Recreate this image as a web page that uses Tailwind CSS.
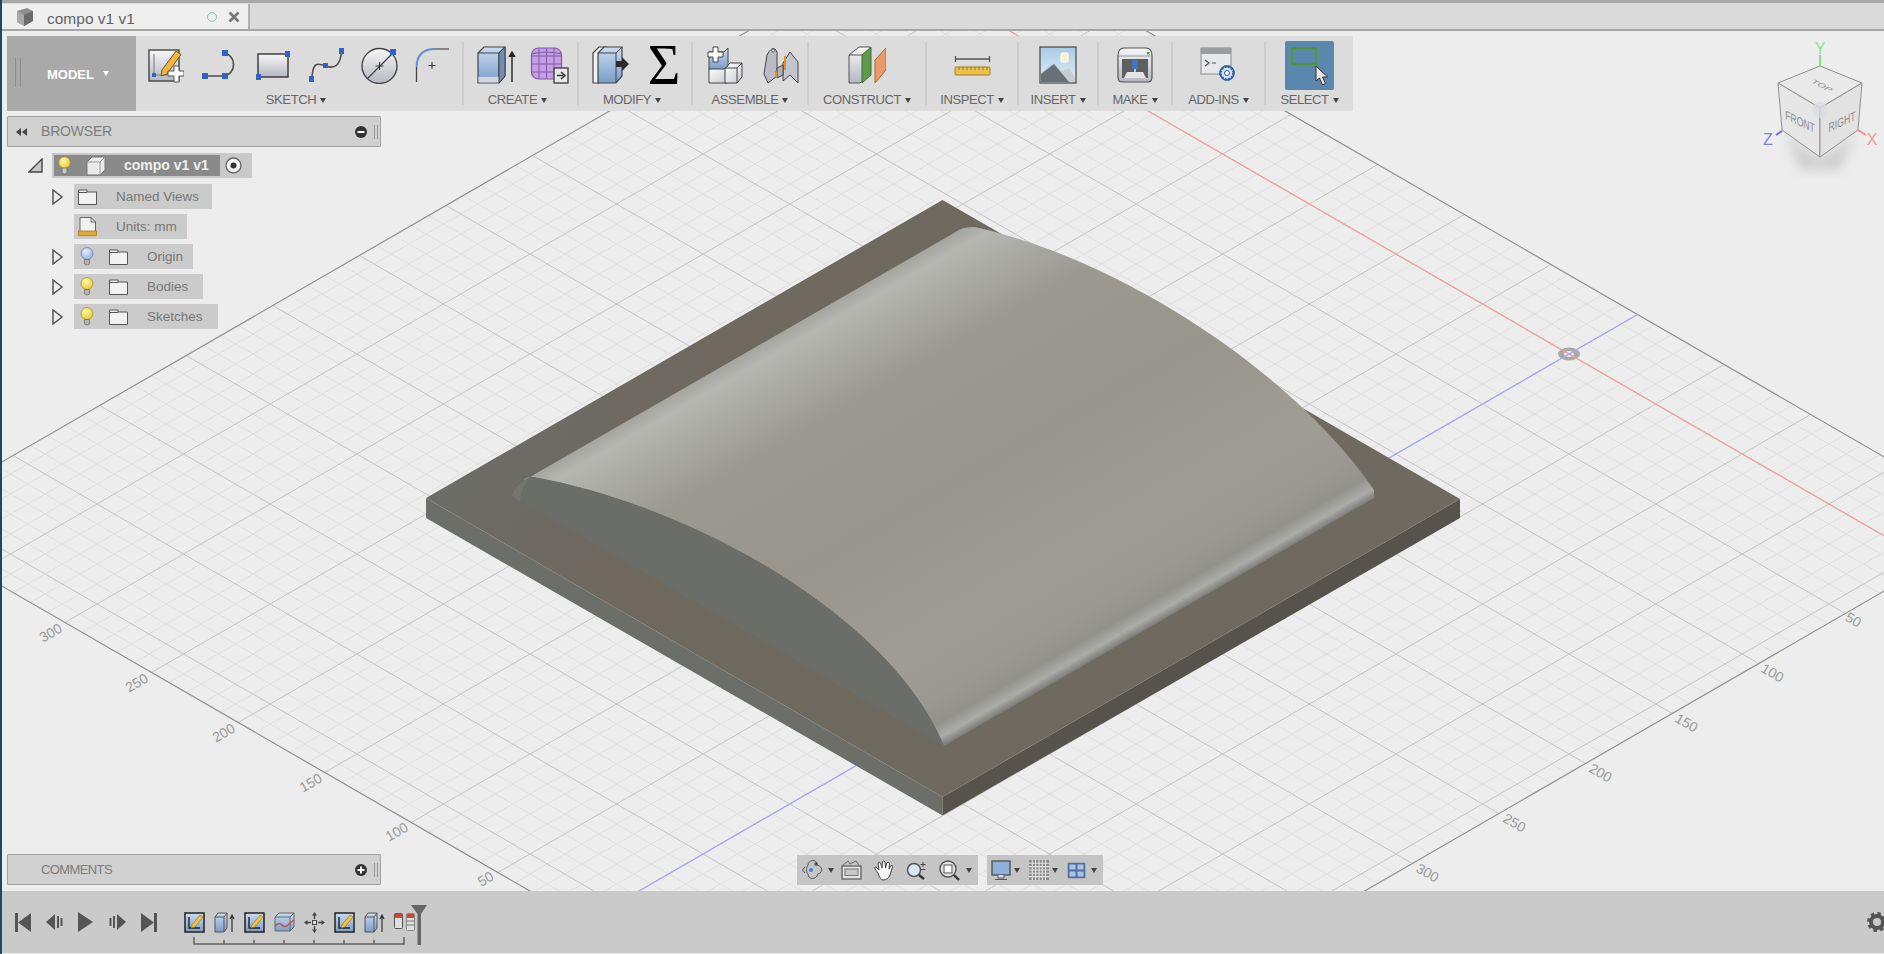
<!DOCTYPE html>
<html lang="en">
<head>
    <meta charset="UTF-8">
    <title>compo v1 v1</title>
    <script src="https://cdn.jsdelivr.net/npm/@tailwindcss/browser@4"></script>
</head>
<body class="overflow-hidden">
<!-- shared gradients -->
<svg class="absolute w-0 h-0">
    <defs>
        <linearGradient id="gPaper" x1="0" y1="0" x2="0" y2="1"><stop offset="0" stop-color="#f7f7f7"/><stop offset="1" stop-color="#b4b8c2"/></linearGradient>
        <linearGradient id="gBlue" x1="0" y1="0" x2="0" y2="1"><stop offset="0" stop-color="#c9dcf0"/><stop offset="1" stop-color="#7c9cc8"/></linearGradient>
        <linearGradient id="gWhite" x1="0" y1="0" x2="1" y2="1"><stop offset="0" stop-color="#ffffff"/><stop offset="1" stop-color="#c9ccd2"/></linearGradient>
        <linearGradient id="gSky" x1="0" y1="0" x2="0" y2="1"><stop offset="0" stop-color="#a9cbe6"/><stop offset="1" stop-color="#e3eef6"/></linearGradient>
        <radialGradient id="gBulb" cx=".4" cy=".35" r=".7"><stop offset="0" stop-color="#fff9b0"/><stop offset="1" stop-color="#efc822"/></radialGradient>
        <radialGradient id="gBulbBlue" cx=".4" cy=".35" r=".7"><stop offset="0" stop-color="#e6effc"/><stop offset="1" stop-color="#8fb0e6"/></radialGradient>
    </defs>
</svg>

<div class="flex flex-col w-[1884px] h-[954px] overflow-hidden bg-[#ededed] text-[#777] font-['Liberation_Sans',sans-serif] border-l-2 border-l-[#1c4a66]">

    <!-- Tab bar -->
    <div class="flex h-[31px] shrink-0 bg-[#dadada] border-t-[3px] border-t-[#a8a8a8] border-b-2 border-b-[#a6a6a6]">
        <div class="flex items-center w-[248px] mt-[1px] bg-[#efefef] border-r-2 border-r-[#b0b0b0] pl-[12px]">
            <svg width="22" height="20" viewBox="0 0 20 20"><path d="M2 4 L12 1 L18 4 L18 14 L9 19 L2 15 Z" fill="#8f8f8f"/><path d="M9 8 L18 4 L18 14 L9 19 Z" fill="#6a6a6a"/><path d="M2 4 L9 8 L9 19 L2 15 Z" fill="#a8a8a8"/></svg>
            <span class="ml-[11px] mt-[5px] text-[15.5px] text-[#626262]">compo v1 v1</span>
            <span class="ml-auto w-[10px] h-[10px] rounded-full border-[1.5px] border-[#7fcdbb]"></span>
            <svg class="ml-[11px] mr-[8px]" width="12" height="12" viewBox="0 0 12 12"><path d="M1.5 1.5 L10.5 10.5 M10.5 1.5 L1.5 10.5" stroke="#777" stroke-width="2.6"/></svg>
        </div>
    </div>

    <!-- Canvas -->
    <div class="relative flex flex-col flex-1 min-h-0">
        <svg id="scene" class="absolute left-[-2px] top-0 w-[1884px] h-[860px]" viewBox="0 31 1884 860">
            <defs>
                <linearGradient id="domeFace" gradientUnits="userSpaceOnUse" x1="738" y1="357" x2="957" y2="738">
                    <stop offset="0" stop-color="#a4a59f"/><stop offset=".035" stop-color="#b5b6b1"/><stop offset=".10" stop-color="#abaca6"/><stop offset=".22" stop-color="#9b9990"/>
                    <stop offset=".5" stop-color="#98958c"/><stop offset=".78" stop-color="#a09d95"/><stop offset=".9" stop-color="#9a9890"/><stop offset=".95" stop-color="#92928c"/>
                    <stop offset=".98" stop-color="#abaca7"/><stop offset="1" stop-color="#7c7d78"/>
                </linearGradient>
                <linearGradient id="baseTop" gradientUnits="userSpaceOnUse" x1="426" y1="498" x2="942" y2="797">
                    <stop offset="0" stop-color="#6c6d69"/><stop offset=".12" stop-color="#6d6b65"/><stop offset=".3" stop-color="#6f695f"/><stop offset="1" stop-color="#6e6a60"/>
                </linearGradient>
            </defs>
            <g id="grid"></g>
            <!-- grid labels -->
            <g class="fill-[#9a9a9a] text-[14px]" text-anchor="middle">
                <text transform="translate(53 637) rotate(-30)">300</text>
                <text transform="translate(139 687) rotate(-30)">250</text>
                <text transform="translate(226 737) rotate(-30)">200</text>
                <text transform="translate(313 787) rotate(-30)">150</text>
                <text transform="translate(399 836) rotate(-30)">100</text>
                <text transform="translate(488 883) rotate(-30)">50</text>
                <text transform="translate(1425 877) rotate(30)">300</text>
                <text transform="translate(1512 827) rotate(30)">250</text>
                <text transform="translate(1598 777) rotate(30)">200</text>
                <text transform="translate(1684 727) rotate(30)">150</text>
                <text transform="translate(1770 677) rotate(30)">100</text>
                <text transform="translate(1851 624) rotate(30)">50</text>
            </g>
            <!-- origin -->
            <path fill-rule="evenodd" d="M1558 354 a11 6.5 0 1 0 22 0 a11 6.5 0 1 0 -22 0 Z M1564 354 a5 3 0 1 1 10 0 a5 3 0 1 1 -10 0 Z" fill="#a9a9a9"/>
            <g id="axes"></g>
            <!-- model -->
            <polygon points="426,498 942.5,797 942.5,815.5 426,518" fill="#6c6e6a"/>
            <polygon points="942.5,797 1460,499 1460,518 942.5,815.5" fill="#55534b"/>
            <polygon points="942.5,200 1460,499 942.5,797 426,498" fill="url(#baseTop)"/>
            <path d="M954 233 Q962 226 975 227 C1130 262 1300 380 1374 490 L1374 498 L944 746 C890 615 690 505 533 477 Q528 476 523 481 Z" fill="url(#domeFace)"/>
            <path d="M512 496 Q515 483 533 477 C690 505 890 615 944 746 Z" fill="#6b6d69"/>
            <path d="M512 496 Q515 483 533 477 Q522 482 520 501 Z" fill="#757672"/>
        </svg>

        <!-- Toolbar -->
        <div class="relative flex w-[1346px] h-[75px] mt-[5px] ml-[5px] bg-[#dcdcdc]">
            <div class="relative flex items-center w-[129px] h-[75px] bg-[#a9a9a9] pl-[40px] pt-[2px]">
                <span class="absolute left-[8px] top-[22px] h-[29px] w-[6px] border-x border-x-[#8e8e8e]"></span>
                <span class="text-[13px] font-bold text-white">MODEL</span>
                <i class="ml-[9px] mb-[2px] w-0 h-0 border-x-[3.5px] border-t-[5px] border-x-transparent border-t-white"></i>
            </div>

            <!-- Sketch -->
            <div class="flex flex-col items-center w-[328px] h-[63px] my-[6px] border-r-2 border-r-[#cdcdcd]">
                <div class="flex items-center shrink-0 w-full h-[51px] pb-[5px] pl-[12px] gap-[16.5px]">
                    <svg width="36" height="36" viewBox="0 0 36 36"><rect x="1" y="3" width="30" height="31" fill="url(#gPaper)" stroke="#444" stroke-width="1.4"/><path d="M6 7 V28 H27" fill="none" stroke="#777"/><rect x="4" y="26" width="4" height="4" fill="#2f63c8"/><path d="M14 23 L28 4 L33 7.5 L19 27 L13 29 Z" fill="#f4b63a" stroke="#6a5a30"/><path d="M26 19 h5 v5 h5 v5 h-5 v6 h-5 v-6 h-6 v-5 h6 Z" fill="#fff" stroke="#555"/></svg>
                    <svg width="38" height="34" viewBox="0 0 38 34"><path d="M4 28 H24 A12 12 0 0 0 24 5" fill="none" stroke="#4d4d4d" stroke-width="1.6"/><g fill="#2f63c8"><rect x="1" y="25" width="6" height="6"/><rect x="21" y="25" width="6" height="6"/><rect x="21" y="2" width="6" height="6"/></g></svg>
                    <svg width="36" height="30" viewBox="0 0 36 30"><rect x="3" y="4" width="30" height="23" fill="url(#gPaper)" stroke="#3f3f3f" stroke-width="1.5"/><g fill="#2f63c8"><rect x="30" y="1" width="5" height="6"/><rect x="1" y="24" width="5" height="6"/></g></svg>
                    <svg width="37" height="36" viewBox="0 0 37 36"><path d="M4 33 C4 14 10 16 18 19 C26 22 32 20 34 3" fill="none" stroke="#4d4d4d" stroke-width="1.6"/><g fill="#2f63c8"><rect x="1" y="29" width="5" height="6"/><rect x="15" y="16" width="5" height="5"/><rect x="31" y="1" width="5" height="6"/></g></svg>
                    <svg width="37" height="37" viewBox="0 0 37 37"><circle cx="18.5" cy="19" r="17.5" fill="url(#gPaper)" stroke="#444" stroke-width="1.4"/><path d="M6 32 L32 6" stroke="#444" stroke-width="1.2"/><path d="M18.5 15 v8 M14.5 19 h8" stroke="#333"/><rect x="29" y="2" width="6" height="6" fill="#2f63c8"/></svg>
                    <svg width="35" height="36" viewBox="0 0 35 36"><path d="M1.5 35 V20" stroke="#444" stroke-width="1.3"/><path d="M1.5 20 Q2 3 18 2" fill="none" stroke="#5f8bd8" stroke-width="1.8"/><path d="M18 2 H34" stroke="#555" stroke-width="1.3"/><path d="M17 15 v7 M13.5 18.5 h7" stroke="#333"/></svg>
                </div>
                <div class="flex items-center shrink-0 gap-[4px] h-[14px] pr-[6px] text-[13px] leading-[14px] tracking-[-0.4px] text-[#666]">SKETCH<i class="w-0 h-0 border-x-[3.5px] border-t-[5px] border-x-transparent border-t-[#444]"></i></div>
            </div>

            <!-- Create -->
            <div class="flex flex-col items-center w-[115px] h-[63px] my-[6px] border-r-2 border-r-[#cdcdcd]">
                <div class="flex items-center shrink-0 w-full h-[51px] pb-[5px] pl-[13px] gap-[14px]">
                    <svg width="39" height="38" viewBox="0 0 39 38"><path d="M1 7 L7 1 H28 V30 L22 37 H1 Z" fill="url(#gBlue)" stroke="#444" stroke-width="1.2"/><path d="M1 7 H22 L28 1 M22 7 V37" fill="none" stroke="#444" stroke-width="1.2"/><path d="M22 7 L28 1 V30 L22 37 Z" fill="#6f8fb8" stroke="#444"/><rect x="1.5" y="31" width="20" height="5.5" fill="#d4d6d8"/><path d="M35 36 V7 M32 11 L35 6 L38 11" fill="#222" stroke="#222" stroke-width="1.4"/></svg>
                    <svg width="39" height="38" viewBox="0 0 39 38"><rect x="1.5" y="2" width="30" height="31" rx="7" fill="#c79ee6" stroke="#7e5aa6" stroke-width="1.2"/><path d="M1.5 10 H31 M1.5 18 H31 M1.5 26 H31 M9 2 V33 M16.5 2 V33 M24 2 V33" stroke="#7e5aa6" fill="none"/><path d="M1.5 8 Q16 4 31.5 8" stroke="#7e5aa6" fill="none"/><rect x="24" y="22" width="14" height="15" fill="#e8e8e8" stroke="#444" stroke-width="1.4"/><path d="M27 29.5 h6 M31 26 l4 3.5 l-4 3.5" fill="none" stroke="#333" stroke-width="1.6"/></svg>
                </div>
                <div class="flex items-center shrink-0 gap-[4px] h-[14px] pr-[6px] text-[13px] leading-[14px] tracking-[-0.4px] text-[#666]">CREATE<i class="w-0 h-0 border-x-[3.5px] border-t-[5px] border-x-transparent border-t-[#444]"></i></div>
            </div>

            <!-- Modify -->
            <div class="flex flex-col items-center w-[114px] h-[63px] my-[6px] border-r-2 border-r-[#cdcdcd]">
                <div class="flex items-center shrink-0 w-full h-[51px] pb-[5px] pl-[13px] gap-[19px]">
                    <svg width="37" height="38" viewBox="0 0 37 38"><path d="M1 7 L7 1 H14 V30 L7 37 H1 Z" fill="#f1f1f1" stroke="#444" stroke-width="1.2"/><path d="M6 7 L12 1 H30 V30 L24 37 H6 Z" fill="url(#gBlue)" stroke="#444" stroke-width="1.2"/><path d="M6 7 H24 L30 1 M24 7 V37" fill="none" stroke="#444"/><path d="M24 15 H30 V11 L37 18 L30 25 V21 H24 Z" fill="#2c2c2c"/></svg>
                    <span class="w-[32px] h-[38px] flex items-center justify-center text-[56px] leading-[38px] text-black font-['Liberation_Serif',serif]">Σ</span>
                </div>
                <div class="flex items-center shrink-0 gap-[4px] h-[14px] pr-[6px] text-[13px] leading-[14px] tracking-[-0.4px] text-[#666]">MODIFY<i class="w-0 h-0 border-x-[3.5px] border-t-[5px] border-x-transparent border-t-[#444]"></i></div>
            </div>

            <!-- Assemble -->
            <div class="flex flex-col items-center w-[116px] h-[63px] my-[6px] border-r-2 border-r-[#cdcdcd]">
                <div class="flex items-center shrink-0 w-full h-[51px] pb-[5px] pl-[14px] gap-[20px]">
                    <svg width="36" height="38" viewBox="0 0 36 38"><path d="M2 22 H20 V37 H2 Z" fill="url(#gWhite)" stroke="#444"/><path d="M18 22 L23 17 H35 V31 L30 37 H18 Z" fill="url(#gWhite)" stroke="#444"/><path d="M18 22 H30 L35 17 M30 22 V37" fill="none" stroke="#444"/><path d="M2 6 H17 L21 2 V20 L17 23 H2 Z" fill="url(#gBlue)" stroke="#444"/><path d="M6 1 h5 v5 h5 v5 h-5 v5 h-5 v-5 h-5 v-5 h5 Z" fill="#fff" stroke="#444"/></svg>
                    <svg width="36" height="38" viewBox="0 0 36 38"><path d="M1 28 L4 9 Q8 1 12 3 L14 6 V30 L5 37 Z" fill="#b9bcc4" stroke="#444"/><path d="M20 17 L27 6 L35 16 V37 L27 29 L20 35 Z" fill="#c2c5cc" stroke="#444"/><path d="M14 22 L20 19 V29 L14 32 Z" fill="#aeb1b8" stroke="#444"/><path d="M13 25 V31 M22 10 V24" stroke="#f08a24" stroke-width="2"/><circle cx="10" cy="4.5" r="1.5" fill="#fff" stroke="#555"/></svg>
                </div>
                <div class="flex items-center shrink-0 gap-[4px] h-[14px] text-[13px] leading-[14px] tracking-[-0.4px] text-[#666]">ASSEMBLE<i class="w-0 h-0 border-x-[3.5px] border-t-[5px] border-x-transparent border-t-[#444]"></i></div>
            </div>

            <!-- Construct -->
            <div class="flex flex-col items-center w-[118px] h-[63px] my-[6px] border-r-2 border-r-[#cdcdcd]">
                <div class="flex items-center justify-center shrink-0 w-full h-[51px] pb-[5px]">
                    <svg width="38" height="38" viewBox="0 0 38 38"><path d="M1 9 L11 1 H22 V29 L12 37 H1 Z" fill="url(#gPaper)" stroke="#555"/><path d="M14 9 L23 1 V29 L14 37 Z" fill="#5f9a4a" stroke="#3f6a30"/><path d="M1 9 H14" stroke="#555"/><path d="M27 14 L38 2 V24 L27 37 Z" fill="#eb9c66" stroke="#a8683a"/></svg>
                </div>
                <div class="flex items-center shrink-0 gap-[4px] h-[14px] text-[13px] leading-[14px] tracking-[-0.4px] text-[#666]">CONSTRUCT<i class="w-0 h-0 border-x-[3.5px] border-t-[5px] border-x-transparent border-t-[#444]"></i></div>
            </div>

            <!-- Inspect -->
            <div class="flex flex-col items-center w-[92px] h-[63px] my-[6px] border-r-2 border-r-[#cdcdcd]">
                <div class="flex items-center justify-center shrink-0 w-full h-[51px] pb-[5px]">
                    <svg width="37" height="21" viewBox="0 0 37 21"><path d="M1.5 1 V7 M1.5 4 H35.5 M35.5 1 V7" fill="none" stroke="#555" stroke-width="1.3"/><rect x="1" y="12" width="35" height="8" rx="1" fill="#eec24a" stroke="#a07e2a"/><path d="M5 12 v3 M9 12 v3 M13 12 v3 M17 12 v3 M21 12 v3 M25 12 v3 M29 12 v3 M33 12 v3" stroke="#8a6a20" stroke-width=".8"/></svg>
                </div>
                <div class="flex items-center shrink-0 gap-[4px] h-[14px] text-[13px] leading-[14px] tracking-[-0.4px] text-[#666]">INSPECT<i class="w-0 h-0 border-x-[3.5px] border-t-[5px] border-x-transparent border-t-[#444]"></i></div>
            </div>

            <!-- Insert -->
            <div class="flex flex-col items-center w-[80px] h-[63px] my-[6px] border-r-2 border-r-[#cdcdcd]">
                <div class="flex items-center justify-center shrink-0 w-full h-[51px] pb-[5px]">
                    <svg width="38" height="38" viewBox="0 0 38 38"><rect x="1" y="1" width="36" height="36" fill="url(#gSky)" stroke="#5a5a5a" stroke-width="1.4"/><rect x="22" y="7" width="7" height="9" rx="1" fill="#fbf2c0" stroke="#fff"/><path d="M2 36 V27 L14 17 L23 25 L30 22 L36 32 V36 Z" fill="#c5ccd3"/><path d="M2 36 V28 L15 18 L30 36 Z" fill="#6a7078"/></svg>
                </div>
                <div class="flex items-center shrink-0 gap-[4px] h-[14px] text-[13px] leading-[14px] tracking-[-0.4px] text-[#666]">INSERT<i class="w-0 h-0 border-x-[3.5px] border-t-[5px] border-x-transparent border-t-[#444]"></i></div>
            </div>

            <!-- Make -->
            <div class="flex flex-col items-center w-[74px] h-[63px] my-[6px] border-r-2 border-r-[#cdcdcd]">
                <div class="flex items-center justify-center shrink-0 w-full h-[51px] pb-[5px]">
                    <svg width="38" height="36" viewBox="0 0 38 36"><path d="M2 9 Q2 1 8 1 H30 Q36 1 36 9 V30 Q36 35 32 35 H6 Q2 35 2 30 Z" fill="url(#gPaper)" stroke="#555" stroke-width="1.2"/><path d="M2 9 H36" stroke="#999"/><rect x="6" y="12" width="26" height="19" fill="#5f5f5f"/><rect x="16" y="13" width="6" height="9" fill="#3f77c0"/><path d="M19 22 v3" stroke="#e6e6e6" stroke-width="1.5"/><path d="M8 31 L11 25 H27 L30 31 Z" fill="#e4e4e4"/><rect x="31" y="5" width="2.5" height="2.5" fill="#2fa04a"/></svg>
                </div>
                <div class="flex items-center shrink-0 gap-[4px] h-[14px] text-[13px] leading-[14px] tracking-[-0.4px] text-[#666]">MAKE<i class="w-0 h-0 border-x-[3.5px] border-t-[5px] border-x-transparent border-t-[#444]"></i></div>
            </div>

            <!-- Add-ins -->
            <div class="flex flex-col items-center w-[93px] h-[63px] my-[6px] border-r-2 border-r-[#cdcdcd]">
                <div class="flex items-center justify-center shrink-0 w-full h-[51px] pb-[5px]">
                    <svg width="38" height="36" viewBox="0 0 38 36"><rect x="1" y="1" width="30" height="26" fill="#e6e8ec" stroke="#8a8a8a"/><rect x="1" y="1" width="30" height="6" fill="#9a9ca0"/><path d="M5 13 L9 16 L5 19 M12 16 H16" fill="none" stroke="#555" stroke-width="1.2"/><circle cx="27" cy="26" r="6.5" fill="#cfe0f4" stroke="#2f5f9c" stroke-width="2.4" stroke-dasharray="2.2 1.2"/><circle cx="27" cy="26" r="7" fill="none" stroke="#2f5f9c" stroke-width="1.4"/><circle cx="27" cy="26" r="2.5" fill="#fff" stroke="#2f5f9c"/></svg>
                </div>
                <div class="flex items-center shrink-0 gap-[4px] h-[14px] text-[13px] leading-[14px] tracking-[-0.4px] text-[#666]">ADD-INS<i class="w-0 h-0 border-x-[3.5px] border-t-[5px] border-x-transparent border-t-[#444]"></i></div>
            </div>

            <!-- Select -->
            <div class="flex flex-col items-center w-[87px] h-[63px] my-[6px]">
                <div class="flex items-center justify-center shrink-0 w-full h-[51px] pb-[5px]">
                    <div class="relative shrink-0 w-[49px] h-[49px] bg-[#5a87ad] rounded-[2px]">
                        <span class="absolute left-[6px] top-[6px] w-[26px] h-[18px] border-[2px] border-[#4f9a2a]"></span>
                        <svg class="absolute left-[30px] top-[24px]" width="14" height="22" viewBox="0 0 14 22"><path d="M1 1 L1 16 L4.5 13 L7.5 20 L10.5 18.5 L7.5 12 L12.5 12 Z" fill="#e9e9e9" stroke="#333"/></svg>
                    </div>
                </div>
                <div class="flex items-center shrink-0 gap-[4px] h-[14px] text-[13px] leading-[14px] tracking-[-0.4px] text-[#666]">SELECT<i class="w-0 h-0 border-x-[3.5px] border-t-[5px] border-x-transparent border-t-[#444]"></i></div>
            </div>
        </div>

        <!-- Browser header -->
        <div class="relative flex items-center w-[374px] h-[31px] mt-[5px] ml-[5px] pl-[7px] pr-[2px] bg-[#d0d0d0] border border-[#a3a3a3] rounded-[1px]">
            <svg width="13" height="10" viewBox="0 0 13 10"><path d="M6 1 L1 5 L6 9 Z M12 1 L7 5 L12 9 Z" fill="#444"/></svg>
            <span class="ml-[13px] text-[14px] tracking-[-0.2px] text-[#7d7d7d]">BROWSER</span>
            <svg class="ml-auto mr-[3px]" width="12" height="12" viewBox="0 0 12 12"><circle cx="6" cy="6" r="6" fill="#333"/><rect x="2.5" y="5" width="7" height="2" fill="#fff"/></svg>
            <span class="ml-[4px] w-[4px] h-[14px] border-x border-x-[#9a9a9a]"></span>
        </div>

        <!-- Tree -->
        <div class="relative flex flex-col gap-[5px] mt-[6px] text-[13.5px] text-[#777]">
            <div class="flex items-center h-[25px] mb-[1px] ml-[26px]">
                <svg width="15" height="15" viewBox="0 0 15 15"><path d="M14 1 V14 H1 Z" fill="#c9c9c9" stroke="#444" stroke-width="1.4"/></svg>
                <div class="flex items-center w-[200px] h-[25px] ml-[9px] bg-[#c9c9c9]">
                    <div class="flex items-center w-[166px] h-[21px] ml-[2px] bg-[#8a8a8a] pl-[4px]">
                        <svg width="13" height="19" viewBox="0 0 13 19"><circle cx="6.5" cy="6.5" r="5.8" fill="url(#gBulb)" stroke="#a08a30" stroke-width=".7"/><path d="M4 12 H9 V17 Q6.5 19 4 17 Z" fill="#c9c9c9" stroke="#666" stroke-width=".7"/></svg>
                        <svg class="ml-[15px]" width="20" height="20" viewBox="0 0 20 20"><path d="M1 6 L6 1 H19 V14 L14 19 H1 Z" fill="#eaeaea" stroke="#777"/><path d="M1 6 H14 L19 1 M14 6 V19" fill="none" stroke="#999"/></svg>
                        <span class="ml-[18px] text-[14px] font-bold text-[#eeeeee]">compo v1 v1</span>
                    </div>
                    <svg class="ml-[5px]" width="17" height="17" viewBox="0 0 17 17"><circle cx="8.5" cy="8.5" r="7.5" fill="#f3f3f3" stroke="#666" stroke-width="1.3"/><circle cx="8.5" cy="8.5" r="3" fill="#333"/></svg>
                </div>
            </div>

            <div class="flex items-center h-[25px] ml-[50px]">
                <svg class="w-[22px]" width="22" height="16" viewBox="0 0 22 16"><path d="M1 1 L10 8 L1 15 Z" fill="#efefef" stroke="#555" stroke-width="1.5"/></svg>
                <div class="flex items-center w-[138px] h-[25px] pl-[4px] bg-[#cbcbcb]">
                    <svg width="19" height="16" viewBox="0 0 19 16"><path d="M.5 1 H9 V3 H18.5 V15.5 H.5 Z" fill="#f2f2f2" stroke="#555"/><path d="M.5 3.5 H9" stroke="#555"/></svg>
                    <span class="ml-[19px] mt-[1px]">Named Views</span>
                </div>
            </div>

            <div class="flex items-center h-[25px] ml-[72px]">
                <div class="flex items-center w-[113px] h-[25px] pl-[4px] bg-[#cbcbcb]">
                    <svg width="19" height="19" viewBox="0 0 19 19"><path d="M2 .5 H13 L17.5 5 V15 H2 Z" fill="#f2f2f2" stroke="#666"/><path d="M13 .5 V5 H17.5" fill="none" stroke="#666"/><rect x=".5" y="14" width="18" height="4.5" fill="#e8a92a" stroke="#a07420" stroke-width=".7"/></svg>
                    <span class="ml-[19px] mt-[1px]">Units: mm</span>
                </div>
            </div>

            <div class="flex items-center h-[25px] ml-[50px]">
                <svg class="w-[22px]" width="22" height="16" viewBox="0 0 22 16"><path d="M1 1 L10 8 L1 15 Z" fill="#efefef" stroke="#555" stroke-width="1.5"/></svg>
                <div class="flex items-center w-[119px] h-[25px] pl-[6px] bg-[#cbcbcb]">
                    <svg width="14" height="19" viewBox="0 0 14 19"><circle cx="7" cy="6.5" r="6" fill="url(#gBulbBlue)" stroke="#6a7a96" stroke-width=".7"/><path d="M4.5 12.5 H9.5 V17 Q7 19 4.5 17 Z" fill="#b5b5b5" stroke="#666" stroke-width=".7"/></svg>
                    <svg class="ml-[15px]" width="19" height="16" viewBox="0 0 19 16"><path d="M.5 1 H9 V3 H18.5 V15.5 H.5 Z" fill="#f2f2f2" stroke="#555"/><path d="M.5 3.5 H9" stroke="#555"/></svg>
                    <span class="ml-[19px] mt-[1px]">Origin</span>
                </div>
            </div>

            <div class="flex items-center h-[25px] ml-[50px]">
                <svg class="w-[22px]" width="22" height="16" viewBox="0 0 22 16"><path d="M1 1 L10 8 L1 15 Z" fill="#efefef" stroke="#555" stroke-width="1.5"/></svg>
                <div class="flex items-center w-[129px] h-[25px] pl-[6px] bg-[#cbcbcb]">
                    <svg width="14" height="19" viewBox="0 0 14 19"><circle cx="7" cy="6.5" r="6" fill="url(#gBulb)" stroke="#a08a30" stroke-width=".7"/><path d="M4.5 12.5 H9.5 V17 Q7 19 4.5 17 Z" fill="#b5b5b5" stroke="#666" stroke-width=".7"/></svg>
                    <svg class="ml-[15px]" width="19" height="16" viewBox="0 0 19 16"><path d="M.5 1 H9 V3 H18.5 V15.5 H.5 Z" fill="#f2f2f2" stroke="#555"/><path d="M.5 3.5 H9" stroke="#555"/></svg>
                    <span class="ml-[19px] mt-[1px]">Bodies</span>
                </div>
            </div>

            <div class="flex items-center h-[25px] ml-[50px]">
                <svg class="w-[22px]" width="22" height="16" viewBox="0 0 22 16"><path d="M1 1 L10 8 L1 15 Z" fill="#efefef" stroke="#555" stroke-width="1.5"/></svg>
                <div class="flex items-center w-[144px] h-[25px] pl-[6px] bg-[#cbcbcb]">
                    <svg width="14" height="19" viewBox="0 0 14 19"><circle cx="7" cy="6.5" r="6" fill="url(#gBulb)" stroke="#a08a30" stroke-width=".7"/><path d="M4.5 12.5 H9.5 V17 Q7 19 4.5 17 Z" fill="#b5b5b5" stroke="#666" stroke-width=".7"/></svg>
                    <svg class="ml-[15px]" width="19" height="16" viewBox="0 0 19 16"><path d="M.5 1 H9 V3 H18.5 V15.5 H.5 Z" fill="#f2f2f2" stroke="#555"/><path d="M.5 3.5 H9" stroke="#555"/></svg>
                    <span class="ml-[19px] mt-[1px]">Sketches</span>
                </div>
            </div>
        </div>

        <!-- Comments and view bar -->
        <div class="relative flex items-end mt-auto mb-[5px] ml-[5px]">
            <div class="flex items-center w-[374px] h-[31px] pl-[33px] pr-[2px] bg-[#d0d0d0] border border-[#a3a3a3] rounded-[1px]">
                <span class="text-[13px] tracking-[-0.6px] text-[#7d7d7d]">COMMENTS</span>
                <svg class="ml-auto mr-[3px]" width="12" height="12" viewBox="0 0 12 12"><circle cx="6" cy="6" r="6" fill="#333"/><path d="M6 2.5 V9.5 M2.5 6 H9.5" stroke="#fff" stroke-width="2"/></svg>
                <span class="ml-[4px] w-[4px] h-[14px] border-x border-x-[#9a9a9a]"></span>
            </div>

            <div class="flex items-center w-[181px] h-[30px] ml-[416px] pl-[5px] bg-[#c5c5c5]">
                <svg width="22" height="22" viewBox="0 0 22 22"><path d="M6 6 C6 1 15 -1 15 6 C20 7 22 13 16 15 C14 21 6 21 6 15 C4 14 4 8 6 6 Z" fill="none" stroke="#555"/><path d="M3 8 L0.5 11 L3 14" fill="none" stroke="#555"/><circle cx="9" cy="11" r="2" fill="#2f8ae0"/><path d="M14 3 v4 M12 5 h4" stroke="#333"/></svg>
                <i class="ml-[4px] w-0 h-0 border-x-[3.5px] border-t-[5px] border-x-transparent border-t-[#444]"></i>
                <svg class="ml-[7px]" width="21" height="20" viewBox="0 0 21 20"><path d="M2 5 L7 1 L9 4 L15 1 L18 5" fill="none" stroke="#666"/><rect x="1" y="6" width="19" height="13" fill="#e2e2e2" stroke="#555" stroke-width="1.2"/><rect x="4" y="9" width="13" height="6.5" fill="#c8c8c8" stroke="#777"/></svg>
                <svg class="ml-[11px]" width="21" height="21" viewBox="0 0 21 21"><path d="M5 13 L2 9 Q1 7 3 7 L6 10 L5 3 Q6 1 7.5 3 L9 8 L9.5 1.5 Q11 0 12 2 L12.5 8 L14 2.5 Q16 1.5 16.5 3.5 L16 9 L18 5.5 Q20 5 19.5 7 L17 15 Q15 20 10 20 Q7 20 5 13 Z" fill="#fbfbfb" stroke="#444"/></svg>
                <svg class="ml-[12px]" width="21" height="20" viewBox="0 0 21 20"><circle cx="8" cy="10" r="6.5" fill="#d9e8f2" stroke="#555" stroke-width="1.5"/><path d="M13 15 L18 19" stroke="#333" stroke-width="2.4"/><path d="M17 2 v5 M14.5 4.5 h5 M14.5 9.5 h5" stroke="#444"/></svg>
                <svg class="ml-[12px]" width="21" height="21" viewBox="0 0 21 21"><circle cx="9" cy="9" r="8" fill="#e4e4e4" stroke="#555" stroke-width="1.5"/><rect x="5" y="5" width="8" height="8" fill="#fafafa" stroke="#555"/><path d="M15 15 L20 20" stroke="#333" stroke-width="2.4"/></svg>
                <i class="ml-[6px] w-0 h-0 border-x-[3.5px] border-t-[5px] border-x-transparent border-t-[#444]"></i>
            </div>

            <div class="flex items-center w-[116px] h-[30px] ml-[9px] pl-[4px] bg-[#c5c5c5]">
                <svg width="20" height="21" viewBox="0 0 20 21"><rect x="1" y="1" width="18" height="14" fill="#8fb2dc" stroke="#555" stroke-width="1.4"/><path d="M7 15 V18 H13 V15" fill="#ddd" stroke="#555"/><path d="M4 19.5 H16" stroke="#555"/></svg>
                <i class="ml-[3px] w-0 h-0 border-x-[3.5px] border-t-[5px] border-x-transparent border-t-[#444]"></i>
                <svg class="ml-[9px]" width="20" height="20" viewBox="0 0 20 20"><rect width="20" height="20" fill="#8a8a8a"/><path d="M3.3 0 V20 M6.6 0 V20 M10 0 V20 M13.3 0 V20 M16.6 0 V20 M0 3.3 H20 M0 6.6 H20 M0 10 H20 M0 13.3 H20 M0 16.6 H20" stroke="#e4e4e4" stroke-width="1.1"/></svg>
                <i class="ml-[3px] w-0 h-0 border-x-[3.5px] border-t-[5px] border-x-transparent border-t-[#444]"></i>
                <svg class="ml-[9px]" width="19" height="17" viewBox="0 0 19 17"><rect x=".7" y=".7" width="17.6" height="15.6" rx="1" fill="#4f6f9c"/><rect x="2.5" y="2.5" width="6" height="5" fill="#a9c4e6"/><rect x="10.5" y="2.5" width="6" height="5" fill="#a9c4e6"/><rect x="2.5" y="9.5" width="6" height="5" fill="#a9c4e6"/><rect x="10.5" y="9.5" width="6" height="5" fill="#a9c4e6"/></svg>
                <i class="ml-[5px] w-0 h-0 border-x-[3.5px] border-t-[5px] border-x-transparent border-t-[#444]"></i>
            </div>
        </div>

        <!-- ViewCube -->
        <svg class="absolute right-0 top-[9px] w-[134px] h-[140px]" viewBox="1750 40 134 140">
            <defs><filter id="cubeShadow" x="-50%" y="-50%" width="200%" height="200%"><feGaussianBlur stdDeviation="6"/></filter></defs>
            <path d="M1786 135 L1820 158 L1856 135 L1840 170 L1800 170 Z" fill="#8a8a8a" opacity=".3" filter="url(#cubeShadow)"/>
            <polygon points="1820,66 1862,83 1820,108 1778,83" fill="#e9e9e9" stroke="#8f8f8f"/>
            <polygon points="1778,83 1820,108 1820,157 1782,130" fill="#e6e6e6" stroke="#8f8f8f"/>
            <polygon points="1862,83 1820,108 1820,157 1858,130" fill="#e2e2e2" stroke="#8f8f8f"/>
            <circle cx="1820" cy="110" r="8" fill="#dadce2" opacity=".8"/>
            <g class="fill-[#8c8c8c] text-[12px]" text-anchor="middle">
                <text transform="matrix(.8 .42 -.5 .32 1820 87)">TOP</text>
                <text transform="matrix(.72 .34 0 1.05 1800 126)">FRONT</text>
                <text transform="matrix(.72 -.34 0 1.05 1842 126)">RIGHT</text>
            </g>
            <path d="M1820 66 V55" stroke="#86e486" stroke-width="2"/>
            <path d="M1776 135 L1782 131" stroke="#6a6af0" stroke-width="2"/>
            <path d="M1858 130 L1866 135" stroke="#f09090" stroke-width="2"/>
            <text x="1820" y="54" text-anchor="middle" class="fill-[#86e486] text-[16px]">Y</text>
            <text x="1768" y="145" text-anchor="middle" class="fill-[#7c7cf2] text-[16px]">Z</text>
            <text x="1872" y="145" text-anchor="middle" class="fill-[#f39a9a] text-[16px]">X</text>
        </svg>
    </div>

    <!-- Timeline -->
    <div class="flex items-center h-[63px] shrink-0 pl-[5px] mt-[1px] bg-[#cacaca] border-b border-b-[#e8e8e8]">
        <div class="flex items-center w-[31.5px] justify-center"><svg width="16" height="19" viewBox="0 0 16 19"><rect width="3" height="19" fill="#555"/><path d="M16 0 V19 L3 9.5 Z" fill="#555"/></svg></div>
        <div class="flex items-center w-[31.5px] justify-center"><svg width="17" height="16" viewBox="0 0 17 16"><path d="M9 0 V16 L0 8 Z" fill="#555"/><rect x="11" y="2" width="2" height="12" fill="#555"/><rect x="14.5" y="4" width="2" height="8" fill="#555"/></svg></div>
        <div class="flex items-center w-[31.5px] justify-center"><svg width="15" height="20" viewBox="0 0 15 20"><path d="M0 0 L15 10 L0 20 Z" fill="#555"/></svg></div>
        <div class="flex items-center w-[31.5px] justify-center"><svg width="17" height="16" viewBox="0 0 17 16"><path d="M8 0 V16 L17 8 Z" fill="#555"/><rect x="4" y="2" width="2" height="12" fill="#555"/><rect x=".5" y="4" width="2" height="8" fill="#555"/></svg></div>
        <div class="flex items-center w-[31.5px] justify-center"><svg width="16" height="19" viewBox="0 0 16 19"><path d="M0 0 V19 L13 9.5 Z" fill="#555"/><rect x="13" width="3" height="19" fill="#555"/></svg></div>

        <div class="relative flex items-center ml-[14.5px] h-[24px]">
            <div class="flex items-center justify-center w-[30px]"><svg width="21" height="21" viewBox="0 0 21 21"><rect x="1" y="1" width="19" height="19" fill="url(#gBlue)" stroke="#222" stroke-width="1.5"/><path d="M5 5 V16 H16" fill="none" stroke="#222" stroke-width="1.4"/><path d="M8 13 L16 3 L19 5 L11 15 L7 16 Z" fill="#f3c23c" stroke="#8a6a20" stroke-width=".6"/></svg></div>
            <div class="flex items-center justify-center w-[30px]"><svg width="21" height="21" viewBox="0 0 21 21"><path d="M1 5 L4 1 H13 V16 L10 20 H1 Z" fill="url(#gBlue)" stroke="#555"/><path d="M1 5 H10 L13 1 M10 5 V20" fill="none" stroke="#555"/><path d="M18 20 V4 M16 7 L18 3 L20 7" fill="none" stroke="#333" stroke-width="1.2"/></svg></div>
            <div class="flex items-center justify-center w-[30px]"><svg width="21" height="21" viewBox="0 0 21 21"><rect x="1" y="1" width="19" height="19" fill="url(#gBlue)" stroke="#222" stroke-width="1.5"/><path d="M5 5 V16 H16" fill="none" stroke="#222" stroke-width="1.4"/><path d="M8 13 L16 3 L19 5 L11 15 L7 16 Z" fill="#f3c23c" stroke="#8a6a20" stroke-width=".6"/></svg></div>
            <div class="flex items-center justify-center w-[30px]"><svg width="21" height="20" viewBox="0 0 21 20"><path d="M1 5 L5 1 H20 V15 L16 19 H1 Z" fill="url(#gBlue)" stroke="#666"/><path d="M1 5 H16 L20 1 M16 5 V19" fill="none" stroke="#666"/><path d="M1 14 Q5 10 8 13 T14 13 T20 8" fill="none" stroke="#d0453a" stroke-width="1.2"/></svg></div>
            <div class="flex items-center justify-center w-[30px]"><svg width="21" height="21" viewBox="0 0 21 21"><rect x="8.5" y="8.5" width="4" height="4" fill="#ddd" stroke="#444"/><path d="M10.5 7 V3 M10.5 14 V18 M7 10.5 H3 M14 10.5 H18" stroke="#444" stroke-width="1.4"/><path d="M10.5 0 L13 3.5 H8 Z M10.5 21 L13 17.5 H8 Z M0 10.5 L3.5 8 V13 Z M21 10.5 L17.5 8 V13 Z" fill="#444"/></svg></div>
            <div class="flex items-center justify-center w-[30px]"><svg width="21" height="21" viewBox="0 0 21 21"><rect x="1" y="1" width="19" height="19" fill="url(#gBlue)" stroke="#222" stroke-width="1.5"/><path d="M5 5 V16 H16" fill="none" stroke="#222" stroke-width="1.4"/><path d="M8 13 L16 3 L19 5 L11 15 L7 16 Z" fill="#f3c23c" stroke="#8a6a20" stroke-width=".6"/></svg></div>
            <div class="flex items-center justify-center w-[30px]"><svg width="21" height="21" viewBox="0 0 21 21"><path d="M1 5 L4 1 H13 V16 L10 20 H1 Z" fill="url(#gBlue)" stroke="#555"/><path d="M1 5 H10 L13 1 M10 5 V20" fill="none" stroke="#555"/><path d="M18 20 V4 M16 7 L18 3 L20 7" fill="none" stroke="#333" stroke-width="1.2"/></svg></div>
            <div class="flex items-center justify-center w-[30px]"><svg width="21" height="18" viewBox="0 0 21 18"><rect x=".5" y=".5" width="8" height="15" rx="1" fill="#e0e0e0" stroke="#555"/><rect x="1" y="1" width="7" height="4" fill="#d0472f"/><rect x="12.5" y=".5" width="8" height="17" rx="1" fill="#e0e0e0" stroke="#888"/><rect x="13" y="1" width="7" height="4" fill="#d0472f"/><path d="M13 8 H20 M13 12 H20" stroke="#777"/></svg></div>
            <!-- feature bracket -->
            <svg class="absolute left-[14px] top-[27px]" width="212" height="8" viewBox="0 0 212 8"><path d="M1 0 V7 H211 V0 M31 3 V7 M61 3 V7 M91 3 V7 M121 3 V7 M151 3 V7 M181 3 V7" fill="none" stroke="#666" stroke-width="1.6"/></svg>
        </div>

        <svg class="ml-[-8px] mt-[6px]" width="16" height="40" viewBox="0 0 16 40"><path d="M0 0 H16 L10 9 V40 H6.5 V9 Z" fill="#666"/></svg>

        <svg class="ml-auto mr-[-3px]" width="20" height="20" viewBox="0 0 20 20"><circle cx="10" cy="10" r="6" fill="none" stroke="#555" stroke-width="4"/><circle cx="10" cy="10" r="8.5" fill="none" stroke="#555" stroke-width="3" stroke-dasharray="3.4 3.3"/></svg>
    </div>
</div>

<script>
    // builds the construction grid: two line families at +/-30 degrees
    const k = 0.5774, NS = 'http://www.w3.org/2000/svg';
    const aMin = -631, aMax = 585, bMin = 463, bMax = 1679, a0 = -552, b0 = 1260;
    const grid = document.getElementById('grid');
    const axes = document.getElementById('axes');
    function line(parent, x1, y1, x2, y2, color, w) {
        const l = document.createElementNS(NS, 'line');
        l.setAttribute('x1', x1); l.setAttribute('y1', y1);
        l.setAttribute('x2', x2); l.setAttribute('y2', y2);
        l.setAttribute('stroke', color); l.setAttribute('stroke-width', w);
        parent.appendChild(l);
    }
    const pt = (a, b) => [(b - a) / (2 * k), (a + b) / 2];
    function aLine(a, c, w, parent = grid) { line(parent, ...pt(a, bMin), ...pt(a, bMax), c, w); }
    function bLine(b, c, w, parent = grid) { line(parent, ...pt(aMin, b), ...pt(aMax, b), c, w); }
    for (const major of [false, true]) {
        const c = major ? '#c4c4c4' : '#dfdfdf';
        for (let i = -3; a0 + 20 * i <= aMax; i++) {
            if ((i % 5 === 0) === major) aLine(a0 + 20 * i, c, 1);
        }
        for (let j = -39; b0 + 20 * j <= bMax; j++) {
            if ((j % 5 === 0) === major) bLine(b0 + 20 * j, c, 1);
        }
    }
    aLine(aMin, '#909090', 1.2); aLine(aMax, '#909090', 1.2);
    bLine(bMin, '#909090', 1.2); bLine(bMax, '#909090', 1.2);
    // the X and Z axes
    aLine(a0, '#f2a0a0', 1.3, axes);
    bLine(b0, '#a6a6f2', 1.3, axes);
</script>
</body>
</html>
